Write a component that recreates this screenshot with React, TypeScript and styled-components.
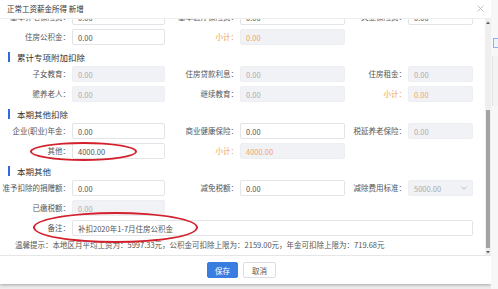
import React, { useLayoutEffect, useRef } from "react";
import styled, { createGlobalStyle } from "styled-components";

const Global = createGlobalStyle`
  html, body { margin: 0; padding: 0; }
  body {
    width: 498px; height: 289px; overflow: hidden; background: #efefef;
    font-family: "Noto Sans CJK SC", "Liberation Sans", sans-serif;
  }
`;

const Page = styled.div`
  position: relative;
  display: flex;
  width: 498px;
  height: 289px;
  background: #ececec;
`;

const Dialog = styled.div`
  width: 491px;
  height: 284px;
  flex: none;
  background: #fff;
  display: flex;
  flex-direction: column;
  box-shadow: 0 1px 3px rgba(0, 0, 0, 0.3);
`;

const Header = styled.div`
  height: 19px;
  flex: none;
  box-sizing: border-box;
  display: flex;
  align-items: center;
  justify-content: space-between;
  padding: 0 7px 2px 7px;
  border-bottom: 1px solid #eeeeee;
  font-size: 7.5px;
  color: #333;
`;

const Body = styled.div`
  height: 236px;
  flex: none;
  display: flex;
`;

const ScrollArea = styled.div`
  flex: 1;
  overflow: hidden;
`;

const Content = styled.div`
  display: flex;
  flex-direction: column;
  padding: 20px 0 12px;
`;

const Heading = styled.div`
  display: flex;
  align-items: center;
  height: 12px;
  margin: 6px 0 3px;
  font-size: 8.5px;
  color: #333;
`;

const Bar = styled.span`
  width: 2px;
  height: 10px;
  background: #2d6be0;
  margin: 0 7px 0 8px;
`;

const Grid = styled.div`
  display: grid;
  grid-template-columns: 72px 93px 75px 105px 63px 65px;
  grid-auto-rows: 16px;
  row-gap: 4px;
`;

const Label = styled.div<{ $orange?: boolean; $col?: number }>`
  grid-column: ${(p) => p.$col ?? "auto"};
  text-align: right;
  padding-right: 2px;
  white-space: nowrap;
  font-size: 7.5px;
  line-height: 16px;
  color: ${(p) => (p.$orange ? "#f0a04b" : "#555")};
`;

const Field = styled.div<{ $disabled?: boolean; $orange?: boolean; $span?: string }>`
  grid-column: ${(p) => p.$span ?? "auto"};
  box-sizing: border-box;
  height: 16px;
  display: flex;
  align-items: center;
  justify-content: space-between;
  padding: 0 5px;
  border: 1px solid ${(p) => (p.$disabled ? "#eceef2" : "#e2e4e8")};
  border-radius: 2px;
  background: ${(p) => (p.$disabled ? "#f1f2f5" : "#fff")};
  font-size: 7.5px;
  color: ${(p) => (p.$orange ? "#f2a468" : p.$disabled ? "#a8abb2" : "#555")};
  white-space: nowrap;
`;

const Tip = styled.div`
  margin-top: 4px;
  padding-left: 15px;
  line-height: 10px;
  font-size: 7.5px;
  color: #555;
  white-space: nowrap;
`;

const Rail = styled.div`
  width: 6px;
  flex: none;
  display: flex;
  flex-direction: column;
  background: #efefef;
`;

const ArrowCell = styled.div`
  height: 6px;
  flex: none;
  display: flex;
  align-items: center;
  justify-content: center;
`;

const Track = styled.div`
  flex: 1;
  display: flex;
  flex-direction: column;
  padding: 85px 1px 1px;
`;

const Thumb = styled.div`
  flex: 1;
  background: #a3a3a3;
`;

const Footer = styled.div`
  flex: 1;
  box-sizing: border-box;
  border-top: 1px solid #e6e6e6;
  display: flex;
  align-items: center;
  justify-content: center;
  gap: 5px;
  padding-right: 8px;
`;

const Button = styled.button<{ $primary?: boolean }>`
  height: 16px;
  padding: 0;
  width: ${(p) => (p.$primary ? "31px" : "33px")};
  border-radius: 2px;
  font-family: inherit;
  font-size: 7.5px;
  border: 1px solid ${(p) => (p.$primary ? "#3a7de0" : "#dcdfe6")};
  background: ${(p) => (p.$primary ? "#3a7de0" : "#fff")};
  color: ${(p) => (p.$primary ? "#fff" : "#555")};
`;

const Strip = styled.div`
  flex: 1;
  display: flex;
  flex-direction: column;
  background: #f7f7f7;
  padding-top: 38px;
`;

const Chip = styled.div`
  height: 8px;
  margin-left: 2px;
  border: 1px solid #8fb2ea;
  border-right: none;
  background: #eef4fd;
`;

const StripPanel = styled.div`
  margin-top: 8px;
  height: 50px;
  margin-left: 1px;
  border-left: 1px solid #e2e2e2;
  background: #f3f3f3;
`;

const Ellipse = styled.div`
  position: absolute;
  box-sizing: border-box;
  border: 2px solid #d3202c;
  border-radius: 50%;
  pointer-events: none;
`;

const Close = () => (
  <svg width="7" height="7" viewBox="0 0 7 7">
    <path d="M0.5 0.5L6.5 6.5M6.5 0.5L0.5 6.5" stroke="#b0b0b0" strokeWidth="0.8" />
  </svg>
);

const Chevron = () => (
  <svg width="6" height="4" viewBox="0 0 6 4">
    <path d="M0.5 0.8L3 3.2L5.5 0.8" fill="none" stroke="#a8abb2" strokeWidth="0.7" />
  </svg>
);

const Tri = ({ up }: { up?: boolean }) => (
  <svg width="4" height="3" viewBox="0 0 4 3">
    <path d={up ? "M0 3L2 0.5L4 3Z" : "M0 0L2 2.5L4 0Z"} fill="#606060" />
  </svg>
);

export default function App() {
  const ref = useRef<HTMLDivElement>(null);
  useLayoutEffect(() => {
    if (ref.current) ref.current.scrollTop = 30;
  }, []);

  return (
    <>
      <Global />
      <Page>
        <Dialog>
          <Header>
            <span>正常工资薪金所得 新增</span>
            <Close />
          </Header>
          <Body>
            <ScrollArea ref={ref}>
              <Content>
                <Grid>
                  <Label>基本养老保险费：</Label>
                  <Field>0.00</Field>
                  <Label>基本医疗保险费：</Label>
                  <Field>0.00</Field>
                  <Label>失业保险费：</Label>
                  <Field>0.00</Field>
                  <Label>住房公积金：</Label>
                  <Field>0.00</Field>
                  <Label $orange>小计：</Label>
                  <Field $disabled $orange>0.00</Field>
                </Grid>

                <Heading>
                  <Bar />
                  累计专项附加扣除
                </Heading>
                <Grid>
                  <Label>子女教育：</Label>
                  <Field $disabled>0.00</Field>
                  <Label>住房贷款利息：</Label>
                  <Field $disabled>0.00</Field>
                  <Label>住房租金：</Label>
                  <Field $disabled>0.00</Field>
                  <Label>赡养老人：</Label>
                  <Field $disabled>0.00</Field>
                  <Label>继续教育：</Label>
                  <Field $disabled>0.00</Field>
                  <Label $orange>小计：</Label>
                  <Field $disabled $orange>0.00</Field>
                </Grid>

                <Heading>
                  <Bar />
                  本期其他扣除
                </Heading>
                <Grid>
                  <Label>企业(职业)年金：</Label>
                  <Field>0.00</Field>
                  <Label>商业健康保险：</Label>
                  <Field>0.00</Field>
                  <Label>税延养老保险：</Label>
                  <Field $disabled>0.00</Field>
                  <Label>其他：</Label>
                  <Field>4000.00</Field>
                  <Label $orange>小计：</Label>
                  <Field $disabled $orange>4000.00</Field>
                </Grid>

                <Heading>
                  <Bar />
                  本期其他
                </Heading>
                <Grid>
                  <Label>准予扣除的捐赠额：</Label>
                  <Field>0.00</Field>
                  <Label>减免税额：</Label>
                  <Field>0.00</Field>
                  <Label>减除费用标准：</Label>
                  <Field $disabled>
                    <span>5000.00</span>
                    <Chevron />
                  </Field>
                  <Label>已缴税额：</Label>
                  <Field $disabled>0.00</Field>
                  <Label $col={1}>备注：</Label>
                  <Field $span="2 / 7">补扣2020年1-7月住房公积金</Field>
                </Grid>

                <Tip>
                  温馨提示：本地区月平均工资为：5997.33元，公积金可扣除上限为：2159.00元，年金可扣除上限为：719.68元
                </Tip>
              </Content>
            </ScrollArea>
            <Rail>
              <ArrowCell>
                <Tri up />
              </ArrowCell>
              <Track>
                <Thumb />
              </Track>
              <ArrowCell>
                <Tri />
              </ArrowCell>
            </Rail>
          </Body>
          <Footer>
            <Button $primary>保存</Button>
            <Button>取消</Button>
          </Footer>
        </Dialog>
        <Strip>
          <Chip />
          <StripPanel />
        </Strip>
        <Ellipse style={{ left: 30, top: 142, width: 107, height: 19 }} />
        <Ellipse style={{ left: 33, top: 212, width: 165, height: 31 }} />
      </Page>
    </>
  );
}
